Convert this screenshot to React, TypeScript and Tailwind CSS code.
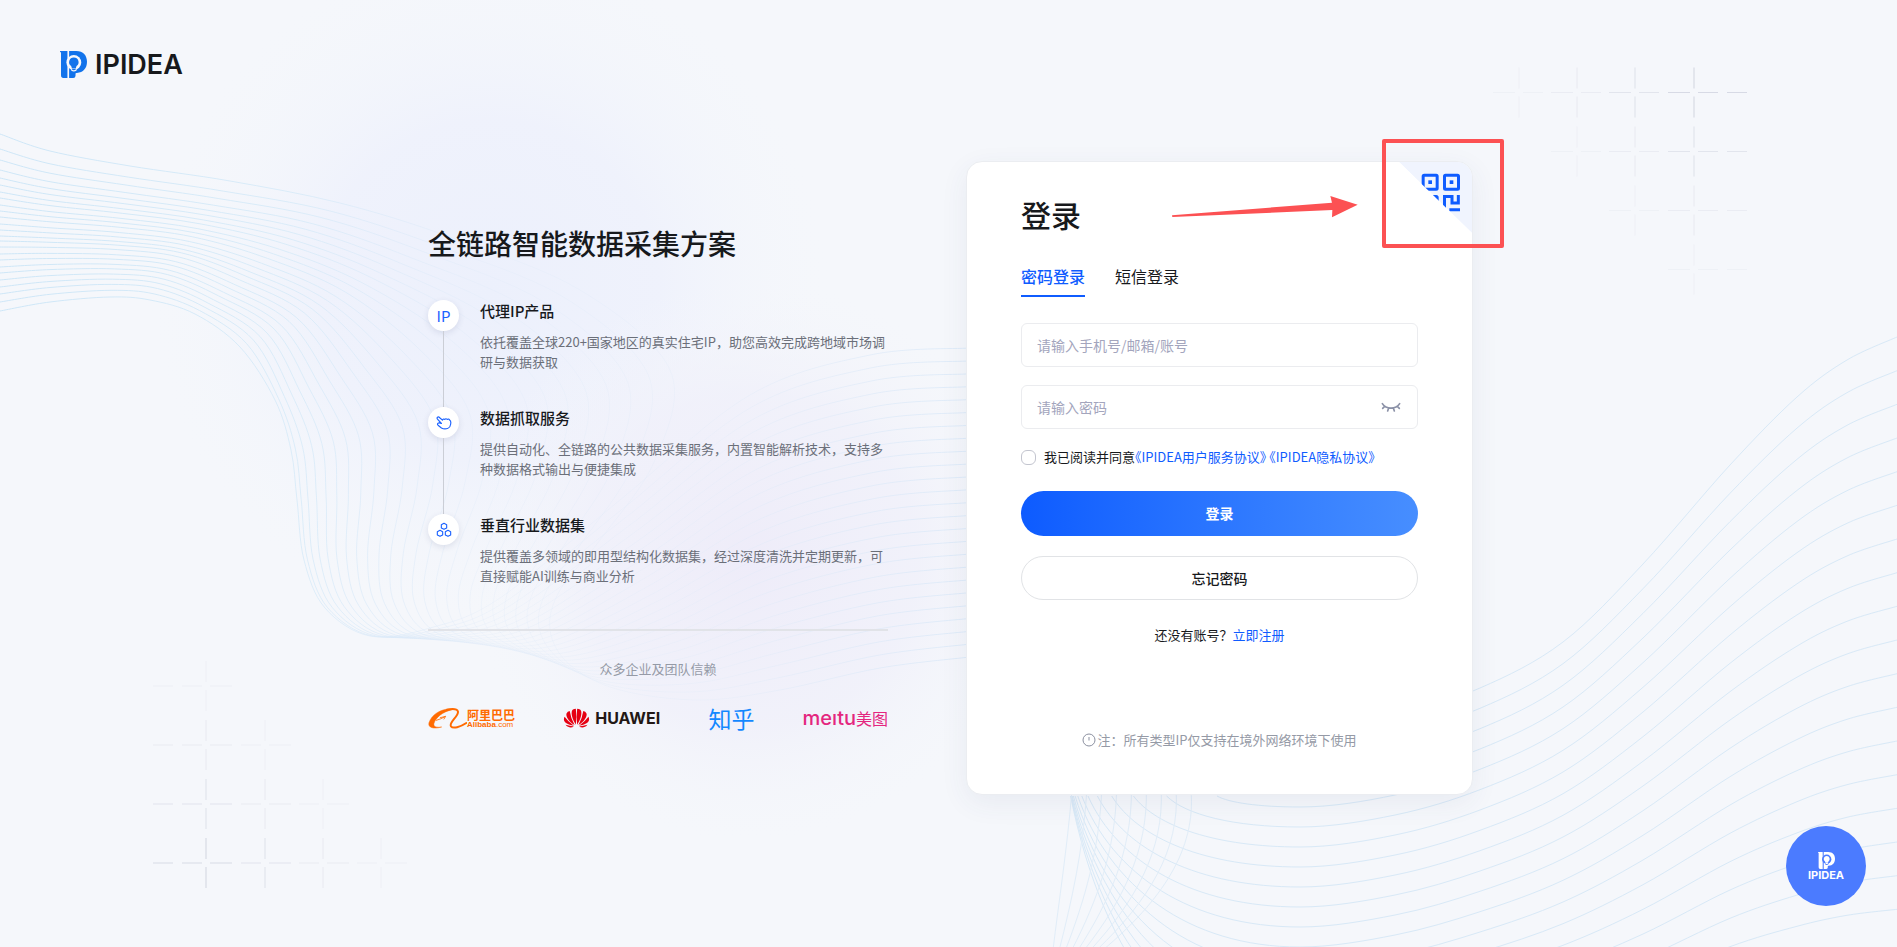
import React from "react";

type Point = [number, number];

const lerp = (a: number, b: number, t: number) => a + (b - a) * t;

function smooth(points: Point[], before?: Point): string {
  let d = before ? "" : `M${points[0][0].toFixed(1)} ${points[0][1].toFixed(1)}`;
  for (let i = 0; i < points.length - 1; i++) {
    const p0 = i === 0 ? before ?? points[0] : points[i - 1];
    const p1 = points[i];
    const p2 = points[i + 1];
    const p3 = points[Math.min(points.length - 1, i + 2)];
    const c = [
      p1[0] + (p2[0] - p0[0]) / 6,
      p1[1] + (p2[1] - p0[1]) / 6,
      p2[0] - (p3[0] - p1[0]) / 6,
      p2[1] - (p3[1] - p1[1]) / 6,
      p2[0],
      p2[1],
    ].map((n) => n.toFixed(1));
    d += ` C${c[0]} ${c[1]} ${c[2]} ${c[3]} ${c[4]} ${c[5]}`;
  }
  return d;
}

const INNER: Point[] = [
  [0, 311], [50, 302], [110, 297], [150, 300], [195, 314], [240, 347], [275, 400], [291, 450],
  [297, 500], [304, 560], [325, 608], [370, 636], [430, 628], [500, 598], [620, 500], [750, 395], [870, 355], [970, 348],
];
const OUTER: Point[] = [
  [0, 134], [50, 151], [130, 166], [230, 181], [340, 203], [450, 237], [580, 290], [670, 370],
  [655, 460], [600, 540], [560, 590], [550, 630], [570, 665], [620, 690], [700, 700], [780, 690], [880, 668], [970, 657],
];
const LEFT_EDGE = [
  134, 149, 160, 170, 178, 185, 192, 198, 205, 211, 217, 224, 230, 236, 241, 247, 254, 260, 267, 273, 280, 287, 294, 302, 311,
];

const leftWaves = LEFT_EDGE.map((y, index) => {
  const edge = (311 - y) / 177;
  const body = Math.pow((24 - index) / 24, 1.4);
  const tail = (24 - index) / 24;
  return smooth(
    INNER.map(([x, iy], k): Point => {
      const t = k < 4 ? edge : k < 6 ? lerp(edge, body, 0.5) : k < 12 ? body : tail;
      return [lerp(x, OUTER[k][0], t), lerp(iy, OUTER[k][1], t)];
    }),
  );
});

const RIGHT_TOP: Point[] = [[1480, 688], [1563, 642], [1643, 564], [1730, 465], [1797, 397], [1847, 360], [1897, 337]];
const RIGHT_LOW: Point[] = [[1480, 993], [1563, 967], [1643, 934], [1730, 890], [1797, 864], [1847, 850], [1897, 842]];

const rightWaves = Array.from({ length: 18 }, (_, i) => {
  const low = 727 + 20 * i;
  const left = 1070 + 147 * Math.exp(-(i - 4) * 0.42);
  const pts: Point[] = [
    [1300, low],
    [1395, low - 12],
    ...RIGHT_TOP.map(([x, y], k): Point => [x, lerp(y, RIGHT_LOW[k][1], i / 15)]),
  ];
  if (i < 4) return smooth(pts);
  const w = 1300 - left;
  const h = low - 796;
  return (
    `M${left} 796 C${left + w * 0.14} ${796 + h * 0.6} ${1300 - w * 0.5} ${low} 1300 ${low}` +
    smooth(pts, [1205, low - 12])
  );
});

const fanWaves = Array.from({ length: 9 }, (_, i) => {
  const t = i / 8;
  return `M${lerp(1072, 1191, t)} 790 C${lerp(1067, 1196, t)} 850 ${lerp(1059, 1162, t)} 900 ${lerp(1053, 1103, t)} 950`;
});

function CrossGrid() {
  const xs = [206, 265, 323, 381];
  const ys = [863, 804, 745, 686];
  const out: React.ReactNode[] = [];
  ys.forEach((y, r) => {
    xs.forEach((x, c) => {
      if (r + c > 3) return;
      const o = [0.95, 0.6, 0.32, 0.18][r + c];
      const far = c === 0 ? `M${x - 33} ${y}h-20` : "";
      out.push(<path key={`${r}-${c}`} d={`M${x} ${y + 4}v21M${x} ${y - 4}v-21M${x + 4} ${y}h22M${x - 4} ${y}h-20${far}`} opacity={o} />);
    });
  });
  return <g stroke="#d5d8e4" strokeWidth="1.2" fill="none">{out}</g>;
}

function Backdrop() {
  return (
    <svg
      className="pointer-events-none absolute inset-0 h-full w-full"
      viewBox="0 0 1897 947"
      preserveAspectRatio="xMidYMid slice"
      aria-hidden="true"
    >
      <defs>
        <radialGradient id="glowA">
          <stop offset="0" stopColor="#ecf0fc" />
          <stop offset="0.5" stopColor="#eef1fc" stopOpacity="0.85" />
          <stop offset="1" stopColor="#f4f7fc" stopOpacity="0" />
        </radialGradient>
        <radialGradient id="glowB">
          <stop offset="0" stopColor="#eeecf9" />
          <stop offset="0.6" stopColor="#f0f0fa" stopOpacity="0.8" />
          <stop offset="1" stopColor="#f4f6fb" stopOpacity="0" />
        </radialGradient>
        <linearGradient id="waveLeft" gradientUnits="userSpaceOnUse" x1="0" y1="0" x2="970" y2="0">
          <stop offset="0" stopColor="#cde6f7" />
          <stop offset="0.3" stopColor="#d6eaf8" stopOpacity="0.85" />
          <stop offset="0.4" stopColor="#d8e8f8" stopOpacity="0.55" />
          <stop offset="0.5" stopColor="#dce8f7" stopOpacity="0.25" />
          <stop offset="0.75" stopColor="#dce8f7" stopOpacity="0.25" />
          <stop offset="1" stopColor="#d9e8f8" stopOpacity="0.8" />
        </linearGradient>
      </defs>
      <circle cx="490" cy="290" r="340" fill="url(#glowA)" />
      <circle cx="750" cy="560" r="280" fill="url(#glowB)" />
      <g fill="none" stroke="url(#waveLeft)" strokeWidth="1">
        {leftWaves.map((d, i) => <path key={i} d={d} />)}
      </g>
      <g fill="none" stroke="#d8e9f7" strokeWidth="1">
        {rightWaves.map((d, i) => <path key={i} d={d} />)}
      </g>
      <g fill="none" stroke="#e1edf8" strokeWidth="1">
        {fanWaves.map((d, i) => <path key={i} d={d} />)}
      </g>
      <CrossGrid />
      <g transform="rotate(180 950 477.75)">
        <CrossGrid />
      </g>
    </svg>
  );
}

function BrandMark({ className, fg, bg }: { className: string; fg: string; bg: string }) {
  return (
    <svg className={className} viewBox="60 48 80 80" aria-hidden="true">
      <path d="M60 48H82V128H70Q63 128 63 120V54Q63 51 60 50Z" fill={fg} />
      <path d="M87 48H108C129 48 140 61 140 80C140 99 129 112 110 113H108Q106 113 106 116V121Q106 128 99 128H87Z" fill={fg} />
      <circle cx="101" cy="82" r="22" fill={bg} />
      <path d="M93 100H109V106Q101 112 93 106Z" fill={bg} />
      <path d="M101 67A14 14 0 0 1 109 92.500L107 98H95L93 92.500A14 14 0 0 1 101 67Z" fill={fg} />
      <path d="M95 100H107V102Q105 105 101 105Q97 105 95 102Z" fill={fg} />
    </svg>
  );
}

function HandIcon() {
  return (
    <svg className="h-[14px] w-[16px]" viewBox="80 77 47 41" fill="none" stroke="#1b62ff" strokeWidth="3.400" strokeLinejoin="round" strokeLinecap="round" aria-hidden="true">
      <path d="M84 81Q87 78 91 82L99 89Q101 84 106 87Q109 83 113 87Q118 84 120 89Q125 92 123 101Q122 110 115 113Q105 117 96 112L86 104Q83 101 86 98Q89 96 96 99L85 87Q82 84 84 81Z" />
    </svg>
  );
}

function ClusterIcon() {
  const hex = (x: number, y: number) =>
    `M${x} ${y - 9}L${x + 8} ${y - 5}V${y + 5}L${x} ${y + 9}L${x - 8} ${y + 5}V${y - 5}Z`;
  return (
    <svg className="h-[16px] w-[16px]" viewBox="78 395 48 48" fill="none" stroke="#1b62ff" strokeWidth="3.400" strokeLinejoin="round" aria-hidden="true">
      <path d={hex(102, 408)} />
      <path d={hex(90, 429)} />
      <path d={hex(114, 429)} />
    </svg>
  );
}

const FEATURES = [
  {
    title: "代理IP产品",
    text: "依托覆盖全球220+国家地区的真实住宅IP，助您高效完成跨地域市场调研与数据获取",
    icon: <span className="text-[15px] leading-none text-[#1b62ff]">IP</span>,
  },
  {
    title: "数据抓取服务",
    text: "提供自动化、全链路的公共数据采集服务，内置智能解析技术，支持多种数据格式输出与便捷集成",
    icon: <HandIcon />,
  },
  {
    title: "垂直行业数据集",
    text: "提供覆盖多领域的即用型结构化数据集，经过深度清洗并定期更新，可直接赋能AI训练与商业分析",
    icon: <ClusterIcon />,
  },
];

function AlibabaLogo() {
  return (
    <div className="flex items-center text-[#ff6a00]">
      <svg className="h-[21px] w-[39px]" viewBox="55 293 117 63" fill="none" stroke="#ff6a00" strokeLinecap="round" aria-hidden="true">
        <path d="M128 296C96 293 66 312 58 337C54 352 72 357 96 350C82 352 70 350 73 339C78 322 98 304 128 298Z" fill="#ff6a00" strokeWidth="1.500" />
        <path d="M112 298C138 293 150 298 143 312C136 326 118 338 124 348C130 356 152 350 170 338" strokeWidth="6" />
        <path d="M80 330Q92 327 106 319M92 322L108 318L103 326" strokeWidth="2.500" />
      </svg>
      <div className="flex flex-col">
        <span className="text-[12px] font-bold leading-[13px]">阿里巴巴</span>
        <span className="font-['Liberation_Sans'] text-[8px] leading-[8px]">
          <b>Alibaba</b>.com
        </span>
      </div>
    </div>
  );
}

function HuaweiLogo() {
  return (
    <div className="flex items-center gap-[5px]">
      <svg className="h-[20px] w-[27px]" viewBox="458 294 80 62" fill="#e60012" aria-hidden="true">
        <path d="M496 346C485 330 478 306 487 299Q491 296 496 296Q499 320 496 346Z" />
        <path d="M500 346C511 330 518 306 509 299Q505 296 500 296Q497 320 500 346Z" />
        <path d="M492 347C474 336 464 320 467 311Q470 304 477 303Q480 325 492 347Z" />
        <path d="M504 347C522 336 532 320 529 311Q526 304 519 303Q516 325 504 347Z" />
        <path d="M490 349C470 347 459 338 459 330Q459 324 461 321Q472 336 490 349Z" />
        <path d="M506 349C526 347 537 338 537 330Q537 324 535 321Q524 336 506 349Z" />
        <path d="M490 351Q484 355 476 354Q467 352 464 346Q478 350 490 351Z" />
        <path d="M506 351Q512 355 520 354Q529 352 532 346Q518 350 506 351Z" />
      </svg>
      <span className="font-['Inter'] text-[16px] font-bold leading-[20px] text-[#231815]">HUAWEI</span>
    </div>
  );
}

function QrCorner() {
  return (
    <button type="button" aria-label="扫码登录" className="absolute right-0 top-0 h-[71px] w-[73px] cursor-pointer overflow-hidden rounded-tr-[15px]">
      <svg className="block h-full w-full" viewBox="178 125 219 213" aria-hidden="true">
        <defs>
          <clipPath id="fold">
            <path d="M178 125H397V338Z" />
          </clipPath>
        </defs>
        <g clipPath="url(#fold)">
          <path d="M178 125H397V338Z" fill="#f0f4fe" />
          <g fill="none" stroke="#0f5cff" strokeWidth="9">
            <rect x="250.500" y="164.500" width="42" height="42" rx="3" />
            <rect x="314.500" y="164.500" width="42" height="42" rx="3" />
            <rect x="250.500" y="228.500" width="42" height="42" rx="3" />
            <path d="M314.500 273V228.500H337V248H356V224M329 268.500H361" />
          </g>
          <g fill="#0f5cff">
            <rect x="266" y="180" width="11" height="11" />
            <rect x="330" y="180" width="11" height="11" />
          </g>
        </g>
      </svg>
    </button>
  );
}

function LoginCard() {
  return (
    <section className="relative w-[507px] shrink-0 rounded-2xl border border-[#ebedf1] bg-white px-[54px] pb-[44px] pt-[32px] shadow-[0_8px_28px_rgba(60,70,110,0.07)]">
      <QrCorner />
      <h2 className="text-[30px] font-medium leading-[40px] text-[#17191c]">登录</h2>
      <div role="tablist" className="mt-[30px] flex gap-[30px] text-[16px] leading-[24px]">
        <button role="tab" aria-selected="true" type="button" className="border-b-2 border-[#0f5cff] pb-[7px] font-medium text-[#0f5cff]">
          密码登录
        </button>
        <button role="tab" aria-selected="false" type="button" className="border-b-2 border-transparent pb-[7px] text-[#17191c]">
          短信登录
        </button>
      </div>
      <form onSubmit={(e) => e.preventDefault()}>
        <input
          type="text"
          aria-label="账号"
          placeholder="请输入手机号/邮箱/账号"
          className="mt-[26px] block h-[44px] w-full rounded-md border border-[#ebecef] bg-white px-[15px] text-[14px] text-[#17191c] outline-none placeholder:text-[#a3a5bd]"
        />
        <div className="mt-[18px] flex h-[44px] items-center rounded-md border border-[#ebecef] bg-white pr-[16px]">
          <input
            type="password"
            aria-label="密码"
            placeholder="请输入密码"
            className="h-full min-w-0 flex-1 bg-transparent px-[15px] text-[14px] text-[#17191c] outline-none placeholder:text-[#a3a5bd]"
          />
          <button type="button" aria-label="显示密码">
            <svg className="h-[11px] w-[20px]" viewBox="1260 94 60 33" fill="none" stroke="#8c92a8" strokeWidth="5" strokeLinecap="round" aria-hidden="true">
              <path d="M1264 99C1275 117 1305 117 1316 99M1271 107L1265 113M1283 112L1280 121M1297 112L1300 121M1309 107L1315 113" />
            </svg>
          </button>
        </div>
        <div className="mt-[18px] flex items-center text-[13px] leading-[20px] text-[#17191c]">
          <input
            id="agree"
            type="checkbox"
            className="mr-[8px] h-[15px] w-[15px] shrink-0 appearance-none rounded-[6px] border border-[#c3c5cf] bg-white checked:border-[#0f5cff] checked:bg-[#0f5cff]"
          />
          <p className="[font-feature-settings:'halt']">
            <label htmlFor="agree">我已阅读并同意</label>
            <a href="#terms" className="text-[#0f5cff]">《IPIDEA用户服务协议》</a>{" "}
            <a href="#privacy" className="text-[#0f5cff]">《IPIDEA隐私协议》</a>
          </p>
        </div>
        <button type="submit" className="mt-[24px] block h-[45px] w-full rounded-full bg-linear-to-r from-[#0d5bff] to-[#478eff] text-[14px] font-bold text-white">
          登录
        </button>
        <button type="button" className="mt-[20px] block h-[44px] w-full rounded-full border border-[#e1e3e6] bg-white text-[14px] font-medium text-[#17191c]">
          忘记密码
        </button>
      </form>
      <p className="mt-[25px] text-center text-[13px] leading-[20px] text-[#17191c]">
        还没有账号？<a href="#register" className="text-[#0f5cff]">立即注册</a>
      </p>
      <p className="mt-[85px] flex items-center justify-center gap-px text-[13px] leading-[20px] text-[#959aa6]">
        <svg className="h-[14px] w-[14px]" viewBox="0 0 14 14" fill="none" stroke="#8b90a0" aria-hidden="true">
          <circle cx="7" cy="7" r="6" />
          <path d="M7 4V7.500" />
        </svg>
        <span>注：所有类型IP仅支持在境外网络环境下使用</span>
      </p>
      <div className="pointer-events-none absolute -right-[32px] -top-[23px] h-[109px] w-[122px] rounded-[2px] border-4 border-[#fc5153]" />
      <svg className="pointer-events-none absolute left-[205px] top-[34px] h-[22px] w-[186px]" viewBox="636 138 558 66" aria-hidden="true">
        <path d="M636 196L1116 158L1111 138L1193 164L1116 202L1117 180L637 201Z" fill="#fc5153" />
      </svg>
    </section>
  );
}

export default function App() {
  return (
    <div className="relative flex min-h-screen flex-col overflow-hidden bg-[#f5f7fb] font-['Noto_Sans_CJK_SC',sans-serif] text-[#17191c]">
      <Backdrop />
      <header className="relative flex h-[161px] shrink-0 items-start px-[60px] pt-[51px]">
        <a href="#home" className="flex items-center gap-[8px]">
          <BrandMark className="h-[27px] w-[27px]" fg="#1273eb" bg="#f6f8fc" />
          <span className="font-['Inter'] text-[27px] font-semibold leading-[27px] text-[#17191c]">IPIDEA</span>
        </a>
      </header>

      <main className="relative flex justify-center gap-[78px] pl-1">
        <section className="w-[460px] pt-[64px]">
          <h1 className="text-[28px] font-medium leading-[36px]">全链路智能数据采集方案</h1>
          <ul className="mt-[39px]">
            {FEATURES.map((f, i) => (
              <li key={f.title} className="flex gap-[21px]">
                <div className="flex flex-col items-center">
                  <div className="flex h-[31px] w-[31px] items-center justify-center rounded-full bg-white shadow-[0_2px_6px_rgba(50,60,110,0.12)]">
                    {f.icon}
                  </div>
                  {i < FEATURES.length - 1 && <div className="w-px flex-1 bg-[#cbced6]" />}
                </div>
                <div className={i < FEATURES.length - 1 ? "flex-1 pb-[35px]" : "flex-1"}>
                  <h3 className="text-[15px] font-medium leading-[22px]">{f.title}</h3>
                  <p className="mt-[10px] text-[13px] leading-[20px] text-[#6b6f79]">{f.text}</p>
                </div>
              </li>
            ))}
          </ul>
          <hr className="mt-[43px] h-[2px] border-0 bg-[#e1e3e8]" />
          <p className="mt-[28px] text-center text-[13px] leading-[20px] text-[#959aa6]">众多企业及团队信赖</p>
          <div className="mt-[28px] flex h-[22px] items-center justify-between">
            <AlibabaLogo />
            <HuaweiLogo />
            <span className="text-[23px] leading-[20px] text-[#1388ff]">知乎</span>
            <span className="flex items-center text-[#e4267f]">
              <span className="font-['Inter'] text-[20px] font-medium leading-[20px]">meıtu</span>
              <span className="text-[16px] leading-[20px]">美图</span>
            </span>
          </div>
        </section>
        <LoginCard />
      </main>

      <button type="button" aria-label="IPIDEA" className="fixed bottom-[41px] right-[31px] flex h-[80px] w-[80px] flex-col items-center justify-center gap-[2px] rounded-full bg-[#4b7bff] text-white">
        <BrandMark className="h-[17px] w-[17px]" fg="#ffffff" bg="#4b7bff" />
        <span className="font-['Inter'] text-[11px] font-bold leading-[9px]">IPIDEA</span>
      </button>
    </div>
  );
}
